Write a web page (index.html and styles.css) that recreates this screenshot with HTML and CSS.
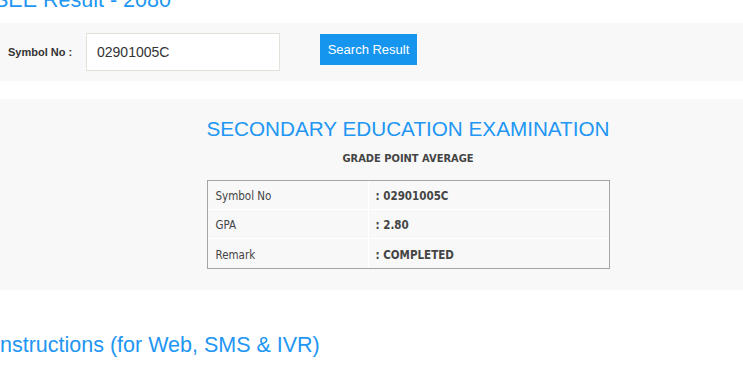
FILE: index.html
```html
<!DOCTYPE html>
<html>
<head>
<meta charset="utf-8">
<link rel="stylesheet" href="styles.css">
</head>
<body>
<div class="page">
  <h1 class="title">SEE Result - 2080</h1>
  <form class="search">
    <label class="search-label">Symbol No :</label>
    <input class="search-input" type="text" value="02901005C">
    <button class="search-btn" type="button">Search Result</button>
  </form>
  <section class="result">
    <h2 class="result-head">SECONDARY EDUCATION EXAMINATION</h2>
    <h3 class="result-sub">GRADE POINT AVERAGE</h3>
    <table class="result-table">
      <tr><td class="k">Symbol No</td><td class="v">: 02901005C</td></tr>
      <tr><td class="k">GPA</td><td class="v">: 2.80</td></tr>
      <tr><td class="k">Remark</td><td class="v">: COMPLETED</td></tr>
    </table>
  </section>
  <h1 class="title title-ins">Instructions (for Web, SMS &amp; IVR)</h1>
</div>
</body>
</html>
```
FILE: styles.css
```css
html, body {
  margin: 0;
  padding: 0;
  background: #fff;
  overflow: hidden;
}
.page {
  width: 816px;
}
.title {
  font-family: "Liberation Sans", sans-serif;
  font-weight: 400;
  font-size: 21.5px;
  line-height: 26px;
  color: #2196f3;
  margin: -13px 0 0 -6px;
  height: 26px;
}
.search {
  margin-top: 10px;
  background: #f8f8f8;
  height: 58px;
  display: flex;
  align-items: center;
  padding-left: 8px;
}
.search-label {
  font-family: "Liberation Sans", sans-serif;
  font-weight: 700;
  font-size: 11px;
  color: #333;
  width: 78px;
}
.search-input {
  box-sizing: border-box;
  width: 194px;
  height: 38px;
  border: 1px solid #e3e1da;
  background: #fff;
  padding: 0 10px;
  font-family: "Liberation Sans", sans-serif;
  font-size: 14px;
  color: #333;
  outline: none;
}
.search-btn {
  margin-left: 40px;
  align-self: flex-start;
  margin-top: 11px;
  width: 97px;
  height: 31px;
  border: 0;
  background: #1595ee;
  color: #fff;
  font-family: "Liberation Sans", sans-serif;
  font-size: 13px;
  padding: 0;
}
.result {
  margin-top: 18px;
  background: #f8f8f8;
  height: 191px;
  display: flex;
  flex-direction: column;
  align-items: center;
  padding-top: 18px;
  box-sizing: border-box;
}
.result-head {
  margin: 0;
  font-family: "Liberation Sans", sans-serif;
  font-weight: 400;
  font-size: 20.7px;
  line-height: 24px;
  color: #2196f3;
}
.result-sub {
  margin: 11px 0 0;
  font-family: "DejaVu Sans Condensed", "DejaVu Sans", sans-serif;
  font-weight: 700;
  font-size: 11px;
  line-height: 14px;
  color: #444;
}
.result-table {
  margin-top: 14px;
  width: 403px;
  border: 1px solid #a4a4a4;
  border-collapse: separate;
  border-spacing: 0;
  font-family: "DejaVu Sans Condensed", "DejaVu Sans", sans-serif;
  font-size: 11.5px;
  color: #444;
}
.result-table td {
  height: 29px;
  padding: 2px 0 0 8px;
  border-bottom: 1px solid #fff;
  box-sizing: border-box;
}
.result-table tr:last-child td {
  border-bottom: 0;
}
.result-table .k {
  width: 161px;
  border-right: 1px solid #fff;
}
.result-table .v {
  font-weight: 700;
  padding-left: 7px;
}
.title-ins {
  margin-top: 42px;
}
```
